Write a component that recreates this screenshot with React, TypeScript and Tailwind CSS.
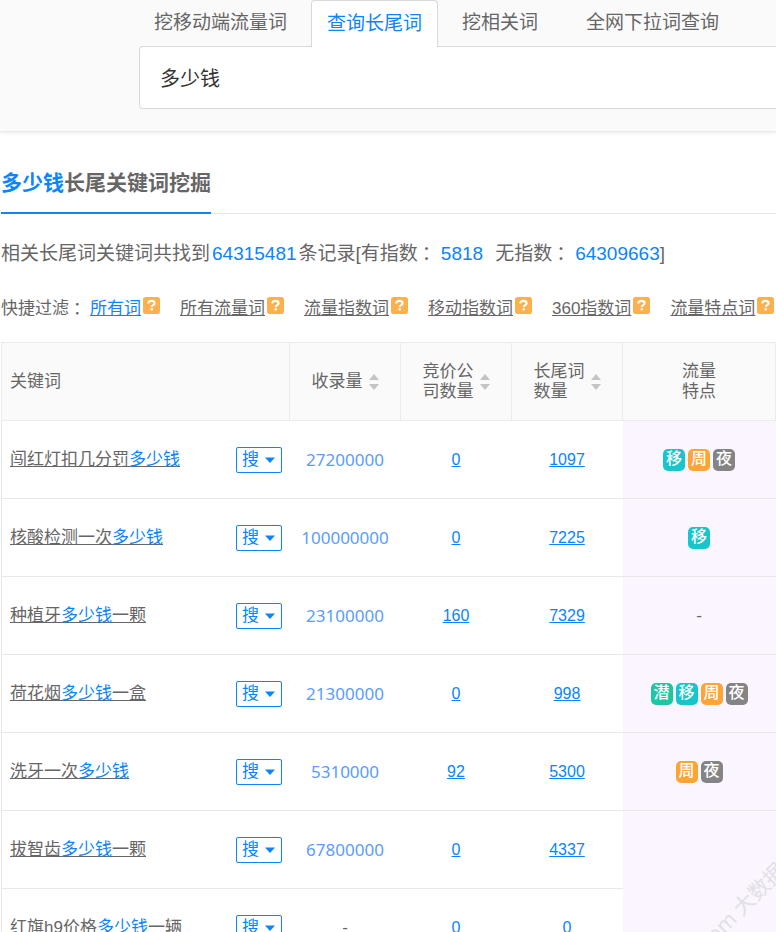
import React, { useState } from 'react';

type Trait = '移' | '周' | '夜' | '潜';

interface KeywordRow {
  parts: [string, string, string];
  collected: string;
  bidders: string;
  longTail: string;
  traits: Trait[];
}

const tabs = ['挖移动端流量词', '查询长尾词', '挖相关词', '全网下拉词查询'];

const filters = ['所有词', '所有流量词', '流量指数词', '移动指数词', '360指数词', '流量特点词'];

const traitColors: Record<Trait, string> = {
  移: 'bg-[#17c5cc]',
  周: 'bg-[#fca535]',
  夜: 'bg-[#848484]',
  潜: 'bg-[#1fc6a2]',
};

const rows: KeywordRow[] = [
  { parts: ['闯红灯扣几分罚', '多少钱', ''], collected: '27200000', bidders: '0', longTail: '1097', traits: ['移', '周', '夜'] },
  { parts: ['核酸检测一次', '多少钱', ''], collected: '100000000', bidders: '0', longTail: '7225', traits: ['移'] },
  { parts: ['种植牙', '多少钱', '一颗'], collected: '23100000', bidders: '160', longTail: '7329', traits: [] },
  { parts: ['荷花烟', '多少钱', '一盒'], collected: '21300000', bidders: '0', longTail: '998', traits: ['潜', '移', '周', '夜'] },
  { parts: ['洗牙一次', '多少钱', ''], collected: '5310000', bidders: '92', longTail: '5300', traits: ['周', '夜'] },
  { parts: ['拔智齿', '多少钱', '一颗'], collected: '67800000', bidders: '0', longTail: '4337', traits: [] },
  { parts: ['红旗h9价格', '多少钱', '一辆'], collected: '-', bidders: '0', longTail: '0', traits: [] },
];

function HelpIcon() {
  return (
    <svg viewBox="0 0 17 17" className="w-[17px] h-[17px] shrink-0" aria-hidden="true">
      <rect width="17" height="17" rx="2.5" fill="#fdb04e" />
      <path d="M5.3 6.6c0-1.8 1.3-2.8 3.2-2.8s3.1 1 3.1 2.4c0 1.9-2.9 1.9-2.9 3.9" fill="none" stroke="#fff" strokeWidth="2.2" />
      <rect x="7.5" y="11.2" width="2.4" height="2.2" fill="#fff" />
    </svg>
  );
}

function SortIcon() {
  return (
    <svg viewBox="0 0 10 16" className="w-[10px] h-4 shrink-0" fill="#c4c4c4" aria-hidden="true">
      <path d="M5 0L10 6H0Z" />
      <path d="M0 10H10L5 16Z" />
    </svg>
  );
}

function SortHeader({ lines }: { lines: string[] }) {
  return (
    <th className="border border-[#ebebeb] font-normal p-0">
      <button className="flex items-center justify-center gap-1.5 w-full text-left">
        <span>
          {lines.map((line) => (
            <span key={line} className="block">{line}</span>
          ))}
        </span>
        <SortIcon />
      </button>
    </th>
  );
}

export default function App() {
  const [activeTab, setActiveTab] = useState('查询长尾词');
  const [query, setQuery] = useState('多少钱');
  const [activeFilter, setActiveFilter] = useState('所有词');

  return (
    <div className="bg-white text-[#666] overflow-hidden font-['Liberation_Sans','Noto_Sans_CJK_SC',sans-serif]">
      {/* Search area */}
      <header className="bg-[#fafafa] pl-[139px] pb-[22px] border-b border-[#ececec] shadow-[0_0_5px_rgba(0,0,0,0.12)]">
        <nav className="flex relative z-10 text-[19px]">
          {tabs.map((tab) => (
            <button
              key={tab}
              onClick={() => setActiveTab(tab)}
              className={
                tab === activeTab
                  ? 'h-[47px] px-[15px] whitespace-nowrap rounded-t border border-b-0 border-[#d9d9d9] bg-white text-[#0a84ff]'
                  : 'h-[46px] px-6 whitespace-nowrap first:pl-[15px]'
              }
            >
              {tab}
            </button>
          ))}
        </nav>
        <input
          aria-label="关键词"
          value={query}
          onChange={(e) => setQuery(e.target.value)}
          className="block -mt-px w-full h-[63px] px-5 text-xl text-[#333] bg-white border border-r-0 border-[#d9d9d9] rounded-l-sm outline-none"
        />
      </header>

      <main className="pl-px">
        <div className="flex pt-7 border-b border-[#e8e8e8]">
          <h1 className="-mb-px h-[54px] leading-[46px] border-b-2 border-[#0a84ff] text-[21px] font-bold">
            <span className="text-[#0a84ff]">多少钱</span>长尾关键词挖掘
          </h1>
        </div>

        <p className="mt-6 text-[19px] leading-8 whitespace-nowrap">
          相关长尾词关键词共找到
          <span className="mx-0.5 text-[#0a84ff]">64315481</span>
          条记录[有指数<span className="pl-1">：</span>
          <span className="text-[#0a84ff]">5818</span>
          <span className="ml-3">无指数</span><span className="pl-1">：</span>
          <span className="text-[#0a84ff]">64309663</span>]
        </p>

        {/* Quick filters */}
        <div className="flex items-center mt-[27px] text-[17px] leading-6 whitespace-nowrap">
          <span>快捷过滤<span className="pl-1">：</span></span>
          <div className="flex gap-5">
            {filters.map((filter) => (
              <a
                key={filter}
                href="#filter"
                onClick={() => setActiveFilter(filter)}
                className="flex gap-0.5"
              >
                <span className={filter === activeFilter ? 'underline text-[#0a84ff]' : 'underline'}>{filter}</span>
                <HelpIcon />
              </a>
            ))}
          </div>
        </div>

        <table className="mt-[21px] w-full table-fixed border-collapse text-[17px] text-center">
          <colgroup>
            <col className="w-[288px]" />
            <col className="w-[111px]" />
            <col className="w-[111px]" />
            <col className="w-[111px]" />
            <col />
          </colgroup>
          <thead>
            <tr className="h-[78px] bg-[#fafafa] leading-5">
              <th className="border border-[#ebebeb] font-normal text-left px-2">关键词</th>
              <SortHeader lines={['收录量']} />
              <SortHeader lines={['竞价公', '司数量']} />
              <SortHeader lines={['长尾词', '数量']} />
              <th className="border border-[#ebebeb] font-normal">
                流量
                <br />
                特点
              </th>
            </tr>
          </thead>
          <tbody>
            {rows.map((row, i) => (
              <tr key={row.parts[0]} className="h-[78px] border-b border-l border-[#e8e8e8]">
                <td className="px-2">
                  <div className="flex items-center justify-between">
                    <a href="#keyword" className="underline">
                      {row.parts[0]}
                      <span className="text-[#0a84ff]">{row.parts[1]}</span>
                      {row.parts[2]}
                    </a>
                    <button className="flex items-center justify-center gap-1.5 w-[46px] h-[26px] border border-[#0a84ff] rounded-xs text-[#0a84ff]">
                      搜
                      <svg viewBox="0 0 10 6" className="w-2.5 h-1.5" fill="currentColor" aria-hidden="true">
                        <path d="M0 0.5H10L5 6Z" />
                      </svg>
                    </button>
                  </div>
                </td>
                <td className={row.collected === '-' ? '' : "font-['Noto_Sans',sans-serif] text-[#5a9cff]"}>{row.collected}</td>
                <td className="text-base"><a href="#bidders" className="underline text-[#0a84ff]">{row.bidders}</a></td>
                <td className="text-base"><a href="#longtail" className="underline text-[#0a84ff]">{row.longTail}</a></td>
                {i < 5 && (
                  <td className="bg-[#faf5ff]">
                    {row.traits.length === 0 ? '-' : (
                      <div className="flex justify-center gap-[3px]">
                        {row.traits.map((trait) => (
                          <span key={trait} className={`${traitColors[trait]} w-[22px] h-[22px] rounded-[5px] text-white text-base leading-5 font-medium`}>
                            {trait}
                          </span>
                        ))}
                      </div>
                    )}
                  </td>
                )}
                {i === 5 && (
                  <td rowSpan={2} className="relative bg-[#faf5ff]">
                    <span className="absolute left-14 top-[74px] -rotate-45 whitespace-nowrap text-[21px] text-[#e2dfe6] font-['Noto_Sans','Noto_Sans_CJK_SC',sans-serif]">
                      .com 大数据流
                    </span>
                  </td>
                )}
              </tr>
            ))}
          </tbody>
        </table>
      </main>
    </div>
  );
}
